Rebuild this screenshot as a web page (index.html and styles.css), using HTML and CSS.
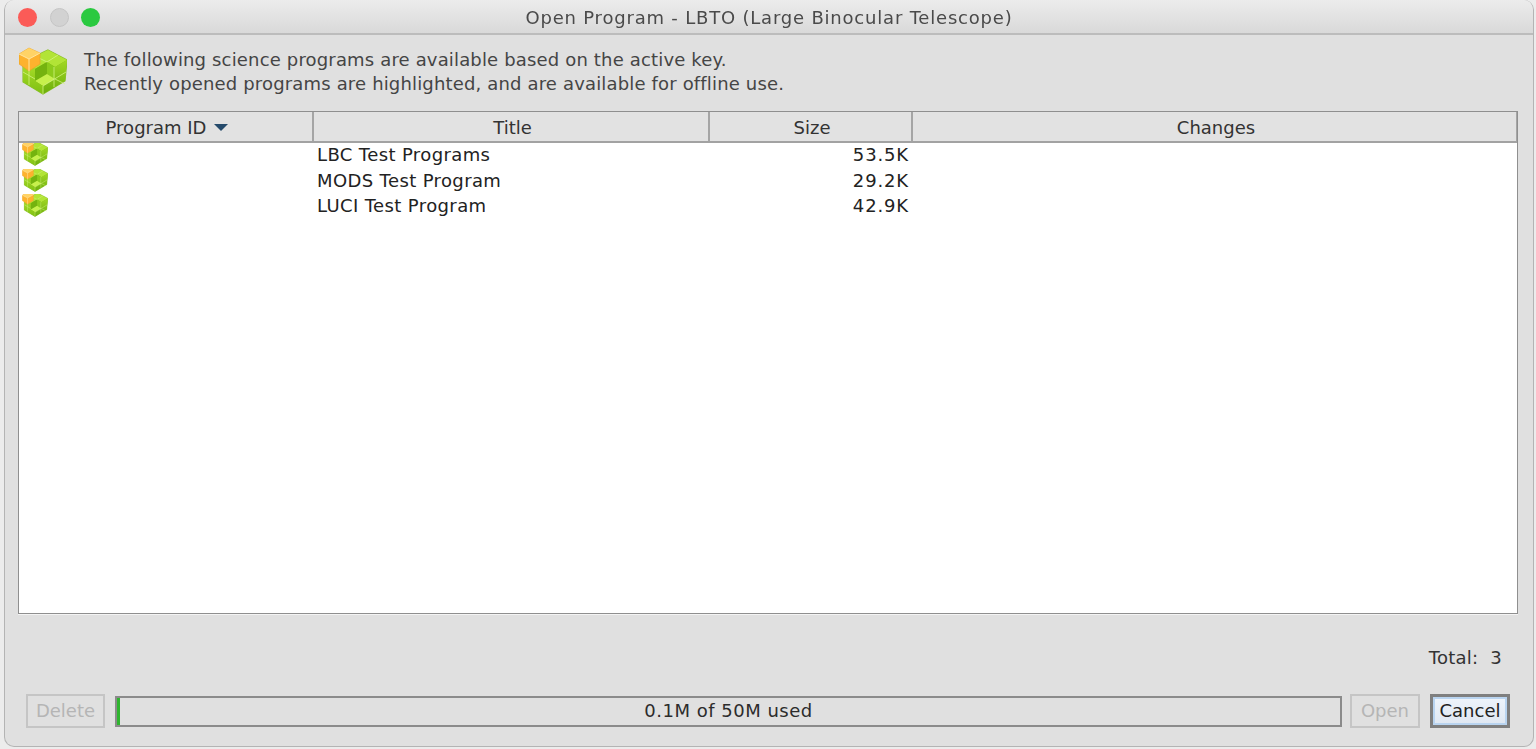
FILE: index.html
```html
<!DOCTYPE html>
<html lang="en">
<head>
<meta charset="utf-8">
<title>Open Program - LBTO (Large Binocular Telescope)</title>
<link rel="stylesheet" href="styles.css">
</head>
<body>
<svg class="defs" width="0" height="0" aria-hidden="true">
  <defs>
    <linearGradient id="g-left" x1="0" y1="0" x2="0" y2="1"><stop offset="0" stop-color="#abde2a"/><stop offset="1" stop-color="#7fc012"/></linearGradient>
    <linearGradient id="g-right" x1="0" y1="0" x2="0" y2="1"><stop offset="0" stop-color="#a2d824"/><stop offset="1" stop-color="#6cae0c"/></linearGradient>
    <symbol id="cubes" viewBox="0 0 48 49">
      <path d="M29 4 48 14 46 35 24 48 4 36V16Z" fill="#7db514" stroke="#8cbf30" stroke-width="1.2"/>
      <path d="M29 4 48 14 36 21 28 16 16 23 4 16Z" fill="#b2e436"/>
      <path d="M16 23 28 16V28L16 35Z" fill="#74b30f"/>
      <path d="M28 16 36 21V33L28 28Z" fill="#8ccb1c"/>
      <path d="M28 28 36 33 24 40 16 35Z" fill="#c6f04c"/>
      <path d="M4 16 16 23V35L24 40V48L4 36Z" fill="url(#g-left)"/>
      <path d="M48 14 36 21V33L24 40V48L46 35Z" fill="url(#g-right)"/>
      <path d="M4 26 16 33M10 20V39M24 40V48M35 21V41M24 40 47 26M39 9 28 16M16 10 28 16M36 33 46 38" fill="none" stroke="#d6f488" stroke-width=".9" opacity=".85"/>
      <path d="M0 8 10 2 21 7V18L10 25 0 18Z" fill="#fdb22e" stroke="#e8a126" stroke-width=".6"/>
      <path d="M0 8 10 2 21 7 10 13Z" fill="#ffd366"/>
      <path d="M10 13V25M0 8 10 13 21 7" fill="none" stroke="#ffe5a0" stroke-width="1"/>
    </symbol>
  </defs>
</svg>
<main class="window">
  <header class="titlebar">
    <div class="lights">
      <span class="light red"></span>
      <span class="light grey"></span>
      <span class="light green"></span>
    </div>
    <h1 class="title">Open Program - LBTO (Large Binocular Telescope)</h1>
  </header>
  <section class="content">
    <div class="intro">
      <svg class="intro-icon"><use href="#cubes"/></svg>
      <p class="intro-text">The following science programs are available based on the active key.<br>Recently opened programs are highlighted, and are available for offline use.</p>
    </div>
    <div class="table">
      <div class="row head">
        <div class="th">Program ID <svg class="sort" viewBox="0 0 14 7"><path d="M0 0H14L7 7Z"/></svg></div>
        <div class="th">Title</div>
        <div class="th">Size</div>
        <div class="th">Changes</div>
      </div>
      <div class="row body-row">
        <div class="td icon-cell"><svg class="row-icon"><use href="#cubes"/></svg></div>
        <div class="td">LBC Test Programs</div>
        <div class="td num">53.5K</div>
        <div class="td"></div>
      </div>
      <div class="row body-row">
        <div class="td icon-cell"><svg class="row-icon"><use href="#cubes"/></svg></div>
        <div class="td">MODS Test Program</div>
        <div class="td num">29.2K</div>
        <div class="td"></div>
      </div>
      <div class="row body-row">
        <div class="td icon-cell"><svg class="row-icon"><use href="#cubes"/></svg></div>
        <div class="td">LUCI Test Program</div>
        <div class="td num">42.9K</div>
        <div class="td"></div>
      </div>
    </div>
    <div class="total">Total:&nbsp; 3</div>
    <div class="actions">
      <button class="btn delete" disabled>Delete</button>
      <div class="usage"><span class="usage-fill"></span><span class="usage-label">0.1M of 50M used</span></div>
      <button class="btn open" disabled>Open</button>
      <button class="btn cancel">Cancel</button>
    </div>
  </section>
</main>
</body>
</html>
```

FILE: styles.css
```css
* { box-sizing: border-box; }
html, body { margin: 0; height: 100%; }
body {
  background: #ececec;
  padding: 0 2px 2px 4px;
  font-family: "DejaVu Sans", sans-serif;
  font-size: 18px;
  color: #2c2c2c;
  overflow: hidden;
}
.defs { position: absolute; }
.window {
  height: 747px;
  display: flex;
  flex-direction: column;
  background: #e0e0e0;
  border: 1px solid #b4b4b4;
  border-top: 0;
  border-radius: 10px;
  overflow: hidden;
  filter: blur(.45px);
}
.titlebar {
  height: 35px;
  flex: none;
  display: flex;
  align-items: center;
  position: relative;
  padding-top: 2px;
  background: linear-gradient(#ececec, #d9d9d9);
  border-bottom: 2px solid #bcbcbc;
}
.lights { display: flex; gap: 12.5px; padding-left: 13px; }
.light { width: 19px; height: 19px; border-radius: 50%; }
.red { background: #fb5b57; }
.grey { background: #d2d2d2; border: 1px solid #c4c4c4; }
.green { background: #2ac940; }
.title {
  position: absolute;
  left: 0;
  right: 0;
  margin: 0;
  text-align: center;
  font-size: 18px;
  font-weight: 400;
  color: #4a4a4a;
  letter-spacing: .8px;
}
.content {
  flex: 1;
  display: flex;
  flex-direction: column;
  padding: 0 15px 0 13px;
}
.intro { height: 76px; flex: none; display: flex; align-items: flex-start; padding-top: 11px; padding-left: 1px; }
.intro-icon { width: 48px; height: 49px; flex: none; }
.intro-text { margin: 2px 0 0 17px; line-height: 24px; color: #454545; letter-spacing: .16px; white-space: nowrap; }
.table {
  height: 503px;
  flex: none;
  background: #fff;
  border: 1px solid #8f8f8f;
  box-shadow: 0 1px 0 #f4f4f4;
}
.row { display: grid; grid-template-columns: 295px 396px 203px 1fr; }
.head { height: 31px; background: #e2e2e2; border-bottom: 2px solid #a2a2a2; }
.th {
  display: flex;
  align-items: center;
  justify-content: center;
  gap: 1px;
  padding: 2px 0 0 3px;
  border-right: 2px solid #a5a5a5;
  color: #333;
}
.th:last-child { border-right: 1px solid #a5a5a5; }
.sort { width: 14px; height: 7px; margin-left: 7px; fill: #254a6b; }
.body-row { height: 25.5px; }
.td { padding: 0 3px; line-height: 23.5px; color: #222; white-space: nowrap; letter-spacing: .38px; }
.icon-cell { overflow: hidden; }
.num { text-align: right; letter-spacing: .85px; padding-right: 4px; }
.row-icon { display: block; width: 26px; height: 26px; margin-top: -3px; }
.total { height: 80px; flex: none; padding: 33px 16px 0 0; text-align: right; color: #333; letter-spacing: .25px; }
.actions { display: flex; align-items: center; padding: 0 8px; height: 34px; }
.btn {
  font: inherit;
  height: 34px;
  padding: 0 0 2px;
  background: #e0e0e0;
  border: 2px solid #c5c5c5;
  color: #b5b5b5;
}
.delete { width: 79px; margin-right: 10px; }
.usage {
  flex: 1;
  height: 31px;
  position: relative;
  display: flex;
  align-items: center;
  justify-content: center;
  padding-bottom: 2px;
  border: 2px solid #8b8b8b;
  background: #e0e0e0;
  color: #2c2c2c;
  letter-spacing: .5px;
}
.usage-fill { position: absolute; left: 0; top: 0; bottom: 0; width: 3px; background: #2fb52f; }
.open { width: 70px; margin: 0 10px 0 8px; }
.cancel {
  width: 80px;
  color: #222;
  border: 3px solid #7f7f7f;
  box-shadow: inset 0 0 0 2px #b9d4f0;
  background: linear-gradient(#eef4fb, #dfe7f2);
}
```
